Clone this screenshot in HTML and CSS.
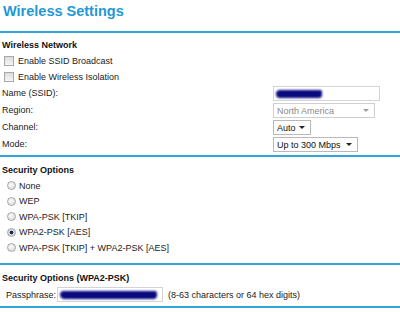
FILE: index.html
```html
<!DOCTYPE html>
<html lang="en">
  <head>
    <meta charset="UTF-8" />
    <title>Wireless Settings</title>
    <link rel="stylesheet" href="styles.css">
  </head>
  <body>
    <h1 class="title">Wireless Settings</h1>
    <div class="rule"></div>

    <div class="group group-network">
      <h2 class="group-head">Wireless Network</h2>
      <div class="check-row"><span class="check"></span>Enable SSID Broadcast</div>
      <div class="check-row"><span class="check"></span>Enable Wireless Isolation</div>
      <div class="field">
        <span class="label">Name (SSID):</span>
        <span class="textbox name-box"><span class="blot blot-name"></span></span>
      </div>
      <div class="field">
        <span class="label">Region:</span>
        <span class="select select-region disabled">North America<i class="arrow"></i></span>
      </div>
      <div class="field">
        <span class="label">Channel:</span>
        <span class="select select-channel">Auto<i class="arrow"></i></span>
      </div>
      <div class="field">
        <span class="label">Mode:</span>
        <span class="select select-mode">Up to 300 Mbps<i class="arrow"></i></span>
      </div>
    </div>
    <div class="rule"></div>

    <div class="group group-security">
      <h2 class="group-head">Security Options</h2>
      <div class="radio-row"><span class="radio"></span>None</div>
      <div class="radio-row"><span class="radio"></span>WEP</div>
      <div class="radio-row"><span class="radio"></span>WPA-PSK [TKIP]</div>
      <div class="radio-row"><span class="radio checked"></span>WPA2-PSK [AES]</div>
      <div class="radio-row"><span class="radio"></span>WPA-PSK [TKIP] + WPA2-PSK [AES]</div>
    </div>
    <div class="rule"></div>

    <div class="group group-psk">
      <h2 class="group-head">Security Options (WPA2-PSK)</h2>
      <div class="pass-row">
        <span class="pass-label">Passphrase:</span>
        <span class="textbox pass-box"><span class="blot blot-pass"></span></span>
        <span class="hint">(8-63 characters or 64 hex digits)</span>
      </div>
    </div>
    <div class="rule"></div>
  </body>
</html>
```

FILE: styles.css
```css
html,
body {
  margin: 0;
  background: #fff;
  font-family: "Liberation Sans", Arial, sans-serif;
  font-size: 9px;
  color: #222;
}

.title {
  margin: 0;
  height: 31px;
  padding-left: 3px;
  font-size: 14.5px;
  line-height: 22px;
  font-weight: bold;
  color: #2398d6;
}

.rule {
  height: 2px;
  background: #2ea7d8;
}

.group {
  padding: 0 2px;
}
.group-network {
  padding-top: 4px;
  padding-bottom: 2px;
}
.group-security {
  padding-top: 5px;
  padding-bottom: 7px;
}
.group-psk {
  padding-top: 5px;
  padding-bottom: 2px;
}

.group-head {
  margin: 0;
  font-size: 9px;
  line-height: 16px;
  font-weight: bold;
  color: #111;
}

/* checkboxes */
.check-row {
  display: flex;
  align-items: center;
  gap: 4px;
  height: 16px;
  padding-left: 2px;
}
.check {
  width: 8px;
  height: 8px;
  border: 1px solid #a8a8a8;
  background: linear-gradient(#dcdcdc, #f6f6f6);
}

/* label + control rows */
.field {
  display: grid;
  grid-template-columns: 271px auto;
  align-items: center;
  height: 17px;
}
.label {
  line-height: 17px;
}

.textbox,
.select {
  box-sizing: border-box;
  height: 15px;
  border: 1px solid #b9b9b9;
  background: #fff;
}
.textbox {
  display: flex;
  align-items: center;
  padding-left: 2px;
}
.name-box {
  width: 107px;
  border-color: #d4d4d4;
}

.select {
  display: flex;
  align-items: center;
  justify-content: space-between;
  padding: 0 5px 0 3px;
  color: #111;
}
.select.disabled {
  border-color: #cfcfcf;
  color: #8a8a8a;
}
.select-region {
  width: 102px;
}
.select-channel {
  width: 38px;
}
.select-mode {
  width: 85px;
}
.arrow {
  width: 0;
  height: 0;
  border-left: 3px solid transparent;
  border-right: 3px solid transparent;
  border-top: 3px solid #222;
}
.disabled .arrow {
  border-top-color: #a0a0a0;
}

/* redacted ink */
.blot {
  display: block;
  background: #0a0a80;
  filter: blur(0.8px);
}
.blot-name {
  width: 46px;
  height: 8px;
  border-radius: 5px 2px 4px 5px;
}
.blot-pass {
  width: 97px;
  height: 8px;
  border-radius: 5px 3px 5px 6px;
}

/* radios */
.radio-row {
  display: flex;
  align-items: center;
  gap: 3px;
  height: 15.5px;
  padding-left: 5px;
}
.radio {
  box-sizing: border-box;
  width: 9px;
  height: 9px;
  border: 1px solid #a4a4a4;
  border-radius: 50%;
  background: radial-gradient(circle at 40% 35%, #fafafa, #d6d6d6);
}
.radio.checked {
  background: radial-gradient(circle, #1d2a55 0, #1d2a55 1.6px, #e0e0e0 2.2px, #d2d2d2);
}

/* passphrase */
.pass-row {
  display: flex;
  align-items: center;
  height: 18px;
  padding-left: 4px;
}
.pass-label {
  width: 51px;
}
.pass-box {
  width: 106px;
  border-color: #d4d4d4;
}
.hint {
  margin-left: 5px;
}
```
